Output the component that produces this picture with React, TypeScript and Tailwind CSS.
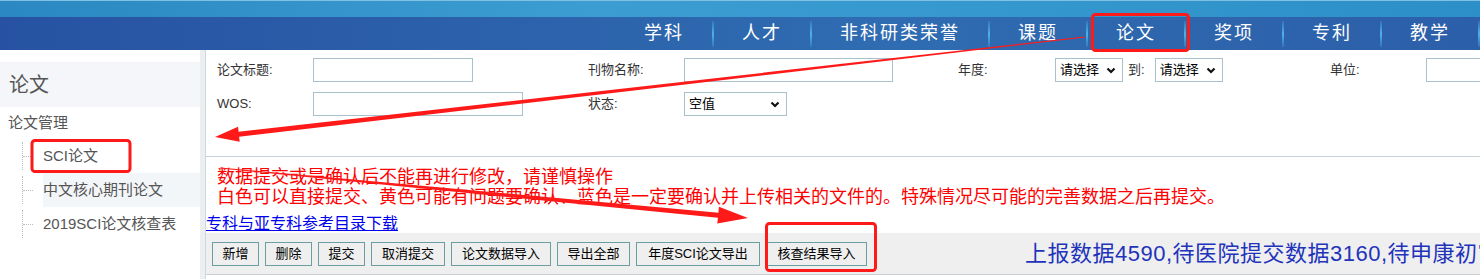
import React from 'react';

const FONT = "font-['Liberation_Sans','Noto_Sans_CJK_SC',sans-serif]";

const NAV = ['学科', '人才', '非科研类荣誉', '课题', '论文', '奖项', '专利', '教学'];
const BUTTONS: [string, string][] = [
  ['新增', 'w-[47px]'],
  ['删除', 'w-[47px]'],
  ['提交', 'w-[47px]'],
  ['取消提交', 'w-[74px]'],
  ['论文数据导入', 'w-[100px]'],
  ['导出全部', 'w-[73px]'],
  ['年度SCI论文导出', 'w-[124px]'],
  ['核查结果导入', 'w-[101px]'],
];

// tapered arrow polygon (thin tail -> thick head)
function arrowPoints(sx: number, sy: number, tx: number, ty: number, w0: number, w1: number, hl: number, hw: number) {
  const dx = tx - sx;
  const dy = ty - sy;
  const len = Math.hypot(dx, dy);
  const ux = dx / len;
  const uy = dy / len;
  const nx = -uy;
  const ny = ux;
  const bx = tx - ux * hl;
  const by = ty - uy * hl;
  const pts = [
    [sx + nx * w0 / 2, sy + ny * w0 / 2],
    [bx + nx * w1 / 2, by + ny * w1 / 2],
    [bx + nx * hw / 2, by + ny * hw / 2],
    [tx, ty],
    [bx - nx * hw / 2, by - ny * hw / 2],
    [bx - nx * w1 / 2, by - ny * w1 / 2],
    [sx - nx * w0 / 2, sy - ny * w0 / 2],
  ];
  return pts.map(p => `${p[0].toFixed(1)},${p[1].toFixed(1)}`).join(' ');
}

const Chevron = () => (
  <svg width="10" height="7" viewBox="0 0 10 7" className="shrink-0">
    <polyline points="1.5,1.5 5,5 8.5,1.5" fill="none" stroke="#111" strokeWidth="2.2" />
  </svg>
);

const Select: React.FC<{ value: string; w: string }> = ({ value, w }) => (
  <div className={`${w} h-[24px] border border-[#a9c1cc] bg-white flex items-center justify-between pl-[4px] pr-[6px] text-[13px] text-black`}>
    <span>{value}</span>
    <Chevron />
  </div>
);

const Label: React.FC<{ children: React.ReactNode }> = ({ children }) => (
  <div className="text-[13px] text-[#333] flex items-center h-[24px] whitespace-nowrap">{children}</div>
);

const Input: React.FC<{ w: string }> = ({ w }) => (
  <div className={`${w} h-[24px] border border-[#a9c1cc] bg-white`} />
);

export default function App() {
  return (
    <div className={`relative w-[1480px] h-[279px] overflow-hidden bg-white ${FONT}`}>
      {/* header */}
      <div className="h-[17px] bg-[linear-gradient(90deg,#2b88c2,#3b9dd2_40%,#3497cd_70%,#2d8fc8)] border-t border-[#7fc0e3]" />
      <div className="h-[33px] bg-[linear-gradient(90deg,#2752a3,#2c62ab_35%,#2f6cb1_60%,#2c5fa9)] flex items-center pl-[616px] whitespace-nowrap">
        {NAV.map(n => (
          <React.Fragment key={n}>
            <div className="shrink-0 px-[28px] text-[18px] tracking-[2px] text-white leading-[33px]">{n}</div>
            <div className="shrink-0 w-[2px] h-[26px] bg-[linear-gradient(180deg,rgba(80,180,235,0.2),#4cb2ea,rgba(80,180,235,0.2))]" />
          </React.Fragment>
        ))}
      </div>

      {/* body */}
      <div className="flex h-[229px]">
        {/* sidebar */}
        <div className="w-[200px] shrink-0 pt-[12px] text-[#555] whitespace-nowrap">
          <div className="h-[45px] bg-[#f4f6f9] flex items-center pl-[9px] text-[20px]">论文</div>
          <div className="h-[32px] flex items-center pl-[8px] text-[15px]">论文管理</div>
          <div className="pl-[22px]">
            {['SCI论文', '中文核心期刊论文', '2019SCI论文核查表'].map((t, i) => (
              <div key={t} className="h-[34px] flex items-center">
                <div className="h-[28px] border-l border-dotted border-[#bbb] flex items-center">
                  <div className="w-[10px] border-t border-dotted border-[#bbb]" />
                </div>
                <div className={`ml-[10px] flex-1 h-full flex items-center text-[15px] ${i === 1 ? 'bg-[#f3f6f9]' : ''}`}>{t}</div>
              </div>
            ))}
          </div>
        </div>
        <div className="w-[6px] shrink-0 bg-[#eceff1] border-r border-[#cdd7dc]" />

        {/* main */}
        <div className="flex-1 min-w-0 overflow-hidden flex flex-col">
          <div className="h-[107px] border-b border-[#c5d2d9] pt-[8px] pl-[11px]">
            <div className="grid grid-cols-[96px_275px_96px_274px_97px_275px_96px_1fr] gap-y-[10px]">
              <Label>论文标题:</Label>
              <Input w="w-[160px]" />
              <Label>刊物名称:</Label>
              <Input w="w-[209px]" />
              <Label>年度:</Label>
              <div className="flex items-center">
                <Select value="请选择" w="w-[68px]" />
                <span className="ml-[5px] mr-[10px] text-[13px] text-[#333]">到:</span>
                <Select value="请选择" w="w-[68px]" />
              </div>
              <Label>单位:</Label>
              <Input w="w-[120px]" />

              <Label>WOS:</Label>
              <Input w="w-[210px]" />
              <Label>状态:</Label>
              <Select value="空值" w="w-[103px]" />
            </div>
          </div>

          <div className="pt-[10px] pl-[11px] text-[18px] leading-[20px] text-[#ff0000] whitespace-nowrap">
            <div>数据提交或是确认后不能再进行修改，请谨慎操作</div>
            <div>白色可以直接提交、黄色可能有问题要确认、蓝色是一定要确认并上传相关的文件的。特殊情况尽可能的完善数据之后再提交。</div>
          </div>
          <div className="h-[26px] flex items-end">
            <a href="#" className="text-[16px] leading-[18px] text-[#0000ee] underline">专科与亚专科参考目录下载</a>
          </div>

          <div className="h-[42px] bg-[#efefef] border-b border-[#c8d0d6] flex items-center pl-[6px] whitespace-nowrap">
            {BUTTONS.map(([b, w]) => (
              <button key={b} className={`shrink-0 ${w} h-[24px] mr-[6px] border border-[#6b9ea0] bg-[#efefef] text-[13px] text-black`}>{b}</button>
            ))}
            <span className="shrink-0 ml-[152px] text-[22px] tracking-[0.5px] text-[#2233bb]">上报数据4590,待医院提交数据3160,待申康初审数据1430</span>
          </div>
        </div>
      </div>

      {/* annotations */}
      <svg className="absolute inset-0 pointer-events-none" width="1480" height="279">
        <polygon points={arrowPoints(1085, 37, 215, 137, 1, 5, 24, 15)} fill="#ff1a1a" />
        <polygon points={arrowPoints(220, 168, 748, 218, 1, 5, 30, 17)} fill="#ff1a1a" />
        <rect x="1092.5" y="14.5" width="96" height="36" rx="3" fill="none" stroke="#ff1a1a" strokeWidth="3" />
        <rect x="32" y="140.5" width="98" height="31" rx="3" fill="none" stroke="#ff1a1a" strokeWidth="3" />
        <rect x="766.5" y="223.5" width="109" height="47" rx="3" fill="none" stroke="#ff1a1a" strokeWidth="3" />
      </svg>
    </div>
  );
}
